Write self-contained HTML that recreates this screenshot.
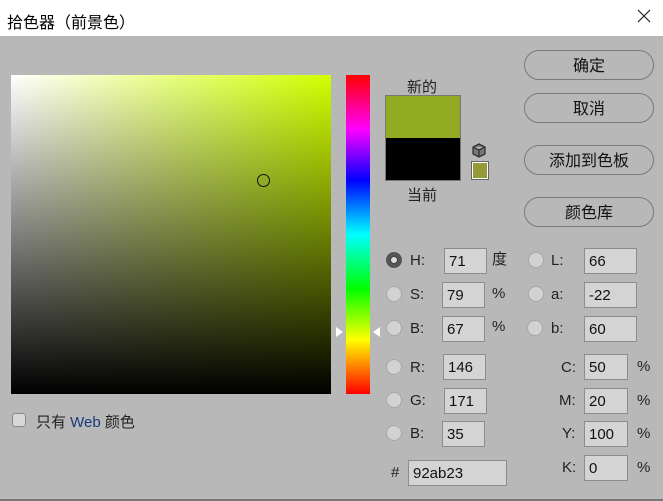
<!DOCTYPE html>
<html><head><meta charset="utf-8"><style>
*{margin:0;padding:0;box-sizing:border-box}
body{width:663px;height:501px;background:#b8b8b8;font-family:"Liberation Sans","Noto Sans CJK SC",sans-serif;position:relative;overflow:hidden;color:#222;font-size:15px}
.a{position:absolute}
.title{left:0;top:0;width:663px;height:36px;background:#fff}
.field{left:11px;top:75px;width:320px;height:319px;background:linear-gradient(to bottom,rgba(0,0,0,0),#000),linear-gradient(to right,#fff,#d2ff00)}
.hue{left:346px;top:75px;width:24px;height:319px;background:linear-gradient(to bottom,#f00 0%,#f0f 17%,#00f 33%,#0ff 50%,#0f0 67%,#ff0 83%,#f00 100%)}
.btn{left:524px;width:130px;height:30px;border:1px solid #7a7a7a;border-radius:15px;text-align:center;line-height:31px;font-size:16px;color:#111}
.rad{width:16px;height:16px;border-radius:50%;background:#d2d2d2;border:1px solid #a8a8a8}
.inp{height:26px;background:#d4d4d4;border:1px solid #8c8c8c;padding-left:4px;line-height:26px;font-size:15px;color:#111}
.lb{font-size:15px;color:#222;line-height:18px}
</style></head><body>
<div class="a title"></div>
<div class="a" style="left:7px;top:9px;font-size:16px;color:#000">拾色器（前景色）</div>
<svg class="a" style="left:637px;top:9px" width="14" height="14" viewBox="0 0 14 14"><path d="M1 1L13 13M13 1L1 13" stroke="#222" stroke-width="1.2"/></svg>
<div class="a field"></div>
<div class="a" style="left:257px;top:174px;width:13px;height:13px;border:1px solid #111;border-radius:50%"></div>
<div class="a hue"></div>
<div class="a" style="left:336px;top:327px;width:0;height:0;border-top:5px solid transparent;border-bottom:5px solid transparent;border-left:7px solid #fff"></div>
<div class="a" style="left:373px;top:327px;width:0;height:0;border-top:5px solid transparent;border-bottom:5px solid transparent;border-right:7px solid #fff"></div>
<div class="a" style="left:12px;top:413px;width:14px;height:14px;background:#d8d8d8;border:1px solid #888;border-radius:3px"></div>
<div class="a" style="left:36px;top:411px">只有 <span style="color:#1a3a7a">Web</span> 颜色</div>
<div class="a" style="left:407px;top:76px">新的</div>
<div class="a" style="left:385px;top:95px;width:76px;height:86px;border:1px solid #777;background:linear-gradient(#92ab23 50%,#000 50%)"></div>
<div class="a" style="left:407px;top:184px">当前</div>
<svg class="a" style="left:472px;top:143px" width="14" height="15" viewBox="0 0 14 15"><path d="M7 1L13 4V11L7 14L1 11V4Z M1 4L7 7L13 4 M7 7V14" fill="#777" stroke="#333" stroke-width="1.3"/></svg>
<div class="a" style="left:472px;top:162px;width:16px;height:17px;background:#959a36;border:1px solid #fff;outline:1px solid #666"></div>
<div class="a btn" style="top:50px">确定</div>
<div class="a btn" style="top:93px">取消</div>
<div class="a btn" style="top:145px">添加到色板</div>
<div class="a btn" style="top:197px">颜色库</div>

<div class="a rad" style="left:386px;top:252px;background:#444;border:4px solid #555"><div style="width:6px;height:6px;margin:1px;background:#ddd;border-radius:50%"></div></div>
<div class="a lb" style="left:410px;top:252px">H:</div>
<div class="a inp" style="left:444px;top:248px;width:43px">71</div>
<div class="a lb" style="left:492px;top:251px">度</div>
<div class="a rad" style="left:528px;top:252px"></div>
<div class="a lb" style="left:551px;top:252px">L:</div>
<div class="a inp" style="left:584px;top:248px;width:53px">66</div>

<div class="a rad" style="left:386px;top:286px"></div>
<div class="a lb" style="left:410px;top:286px">S:</div>
<div class="a inp" style="left:442px;top:282px;width:43px">79</div>
<div class="a lb" style="left:492px;top:285px">%</div>
<div class="a rad" style="left:528px;top:286px"></div>
<div class="a lb" style="left:551px;top:286px">a:</div>
<div class="a inp" style="left:584px;top:282px;width:53px">-22</div>

<div class="a rad" style="left:386px;top:320px"></div>
<div class="a lb" style="left:410px;top:320px">B:</div>
<div class="a inp" style="left:442px;top:316px;width:43px">67</div>
<div class="a lb" style="left:492px;top:318px">%</div>
<div class="a rad" style="left:527px;top:320px"></div>
<div class="a lb" style="left:551px;top:320px">b:</div>
<div class="a inp" style="left:584px;top:316px;width:53px">60</div>

<div class="a rad" style="left:386px;top:359px"></div>
<div class="a lb" style="left:410px;top:359px">R:</div>
<div class="a inp" style="left:443px;top:354px;width:43px">146</div>
<div class="a rad" style="left:386px;top:392px"></div>
<div class="a lb" style="left:410px;top:392px">G:</div>
<div class="a inp" style="left:444px;top:388px;width:43px">171</div>
<div class="a rad" style="left:386px;top:425px"></div>
<div class="a lb" style="left:410px;top:425px">B:</div>
<div class="a inp" style="left:442px;top:421px;width:43px">35</div>
<div class="a lb" style="left:391px;top:464px">#</div>
<div class="a inp" style="left:408px;top:460px;width:99px">92ab23</div>

<div class="a lb" style="left:561px;top:359px">C:</div>
<div class="a inp" style="left:584px;top:354px;width:44px">50</div>
<div class="a lb" style="left:637px;top:358px">%</div>
<div class="a lb" style="left:559px;top:392px">M:</div>
<div class="a inp" style="left:584px;top:388px;width:44px">20</div>
<div class="a lb" style="left:637px;top:392px">%</div>
<div class="a lb" style="left:562px;top:425px">Y:</div>
<div class="a inp" style="left:584px;top:421px;width:44px">100</div>
<div class="a lb" style="left:637px;top:425px">%</div>
<div class="a lb" style="left:562px;top:459px">K:</div>
<div class="a inp" style="left:584px;top:455px;width:44px">0</div>
<div class="a lb" style="left:637px;top:459px">%</div>
<div class="a" style="left:0;top:499px;width:663px;height:2px;background:#777"></div>
</body></html>
